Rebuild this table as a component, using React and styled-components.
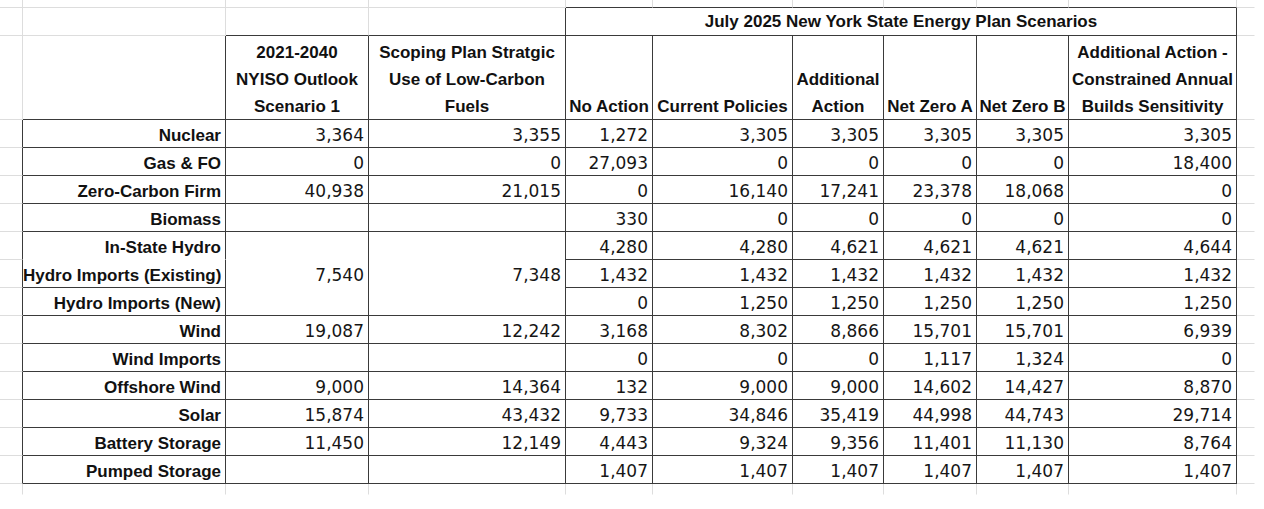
import React from 'react';
import styled, { createGlobalStyle } from 'styled-components';

const GlobalStyle = createGlobalStyle`
  html, body {
    margin: 0;
    padding: 0;
    background: #ffffff;
  }
  body {
    font-family: "Liberation Sans", Arial, sans-serif;
    color: #111111;
  }
`;

const DARK = '#3a3a3a';
const GRID = '#dddddd';
const edge = (v) =>
  `1px solid ${v === 'dark' ? DARK : v === 'grid' ? GRID : 'transparent'}`;

// spreadsheet column widths: lead, A..I, trail
const WIDTHS = [23, 203, 143, 197, 87, 140, 91, 93, 92, 168, 18];

const Sheet = styled.table`
  border-collapse: separate;
  border-spacing: 0;
  table-layout: fixed;
  width: 1255px;
`;

const Cell = styled.td`
  box-sizing: border-box;
  height: ${(p) => p.$h || 28}px;
  padding: 4px 4px 0 0;
  border-right: ${(p) => edge(p.$r)};
  border-bottom: ${(p) => edge(p.$b)};
  white-space: nowrap;
  overflow: hidden;
  vertical-align: middle;
  line-height: 23px;
`;

const Label = styled(Cell)`
  text-align: right;
  font-weight: 700;
  font-size: 17px;
`;

const Num = styled(Cell)`
  text-align: right;
  font-family: "DejaVu Sans", sans-serif;
  font-size: 17px;
  color: #161616;
`;

const Head = styled(Cell)`
  text-align: center;
  vertical-align: bottom;
  font-weight: 700;
  font-size: 17px;
  padding: 0 2px;
`;

const HeadLine = styled.div`
  height: 27px;
  line-height: 30px;
`;

const Title = styled(Cell)`
  text-align: center;
  font-weight: 700;
  font-size: 17px;
  padding: 1px 0 0;
  line-height: 26px;
`;

const HEADS = [
  ['2021-2040', 'NYISO Outlook', 'Scenario 1'],
  ['Scoping Plan Stratgic', 'Use of Low-Carbon', 'Fuels'],
  ['No Action'],
  ['Current Policies'],
  ['Additional', 'Action'],
  ['Net Zero A'],
  ['Net Zero B'],
  ['Additional Action -', 'Constrained Annual', 'Builds Sensitivity'],
];

const ROWS = [
  ['Nuclear', ['3,364', '3,355', '1,272', '3,305', '3,305', '3,305', '3,305', '3,305']],
  ['Gas & FO', ['0', '0', '27,093', '0', '0', '0', '0', '18,400']],
  ['Zero-Carbon Firm', ['40,938', '21,015', '0', '16,140', '17,241', '23,378', '18,068', '0']],
  ['Biomass', ['', '', '330', '0', '0', '0', '0', '0']],
  ['In-State Hydro', ['7,540', '7,348', '4,280', '4,280', '4,621', '4,621', '4,621', '4,644'], 'open'],
  ['Hydro Imports (Existing)', [null, null, '1,432', '1,432', '1,432', '1,432', '1,432', '1,432']],
  ['Hydro Imports (New)', [null, null, '0', '1,250', '1,250', '1,250', '1,250', '1,250']],
  ['Wind', ['19,087', '12,242', '3,168', '8,302', '8,866', '15,701', '15,701', '6,939']],
  ['Wind Imports', ['', '', '0', '0', '0', '1,117', '1,324', '0']],
  ['Offshore Wind', ['9,000', '14,364', '132', '9,000', '9,000', '14,602', '14,427', '8,870']],
  ['Solar', ['15,874', '43,432', '9,733', '34,846', '35,419', '44,998', '44,743', '29,714']],
  ['Battery Storage', ['11,450', '12,149', '4,443', '9,324', '9,356', '11,401', '11,130', '8,764']],
  ['Pumped Storage', ['', '', '1,407', '1,407', '1,407', '1,407', '1,407', '1,407']],
];

export default function App() {
  return (
    <>
      <GlobalStyle />
      <Sheet>
        <colgroup>
          {WIDTHS.map((w, i) => (
            <col key={i} style={{ width: w }} />
          ))}
        </colgroup>
        <tbody>
          {/* cut-off top row */}
          <tr>
            {WIDTHS.map((_, i) => (
              <Cell
                key={i}
                $h={8}
                $r={i < 10 ? 'grid' : 'none'}
                $b={i >= 4 && i <= 9 ? 'dark' : 'grid'}
              />
            ))}
          </tr>
          <tr>
            <Cell $r="grid" $b="grid" />
            <Cell $r="grid" $b="grid" />
            <Cell $r="grid" $b="dark" />
            <Cell $r="dark" $b="dark" />
            <Title colSpan={6} $r="dark" $b="dark">
              July 2025 New York State Energy Plan Scenarios
            </Title>
            <Cell $r="none" $b="grid" />
          </tr>
          <tr>
            <Cell $h={84} $r="grid" $b="grid" />
            <Cell $h={84} $r="dark" $b="dark" />
            {HEADS.map((lines, i) => (
              <Head key={i} $h={84} $r="dark" $b="dark">
                {lines.map((l, j) => (
                  <HeadLine key={j}>{l}</HeadLine>
                ))}
              </Head>
            ))}
            <Cell $h={84} $r="none" $b="grid" />
          </tr>
          {ROWS.map(([label, vals, open]) => (
            <tr key={label}>
              <Cell $r="dark" $b="grid" />
              <Label $r="dark" $b={open ? 'none' : 'dark'}>
                {label}
              </Label>
              {vals.map((v, i) => {
                if (v === null) return null;
                if (open && i < 2) {
                  return (
                    <Num key={i} rowSpan={3} $r="dark" $b="dark">
                      {v}
                    </Num>
                  );
                }
                return (
                  <Num key={i} $r="dark" $b="dark">
                    {v}
                  </Num>
                );
              })}
              <Cell $r="none" $b="grid" />
            </tr>
          ))}
          {/* cut-off bottom row */}
          <tr>
            {WIDTHS.map((_, i) => (
              <Cell key={i} $h={11} $r={i < 10 ? 'grid' : 'none'} $b="none" />
            ))}
          </tr>
        </tbody>
      </Sheet>
    </>
  );
}
